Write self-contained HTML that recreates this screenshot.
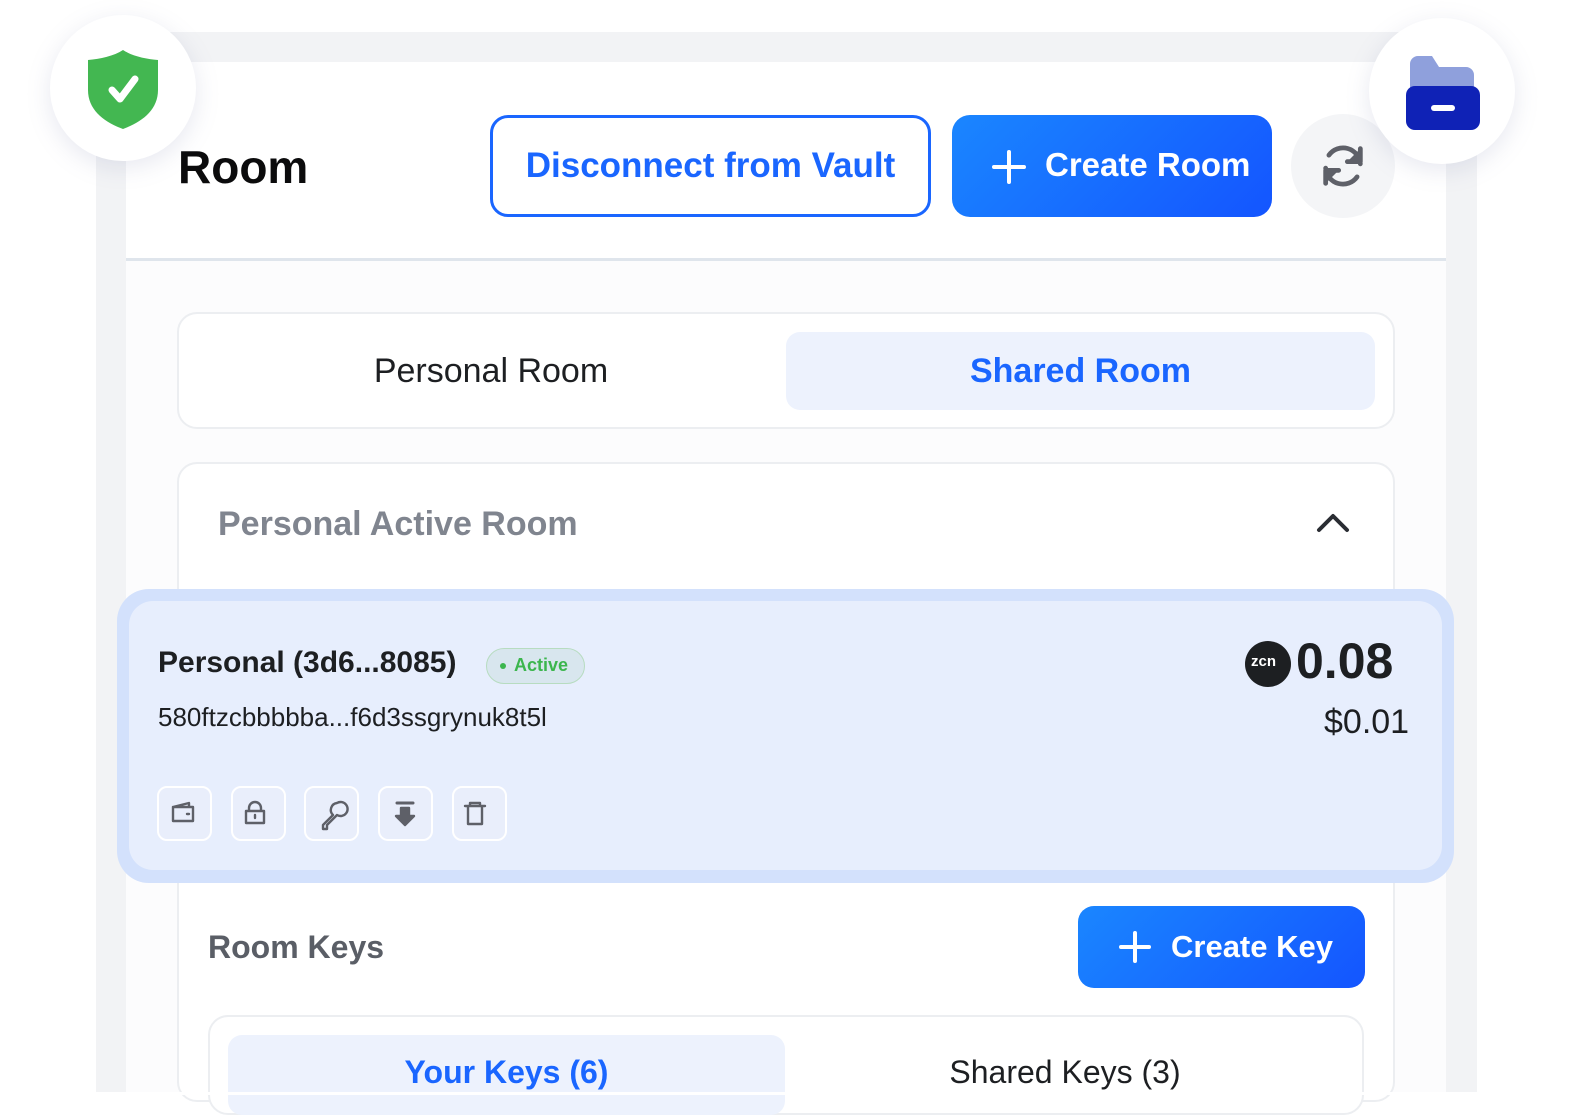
<!DOCTYPE html>
<html><head><style>
*{box-sizing:border-box;margin:0;padding:0}
body{width:1591px;height:1095px;background:#fff;position:relative;overflow:hidden;font-family:"Liberation Sans",sans-serif}
.a{position:absolute}
.t{position:absolute;white-space:nowrap;line-height:1}
</style></head><body>
<div class="a" style="left:96px;top:32px;width:1381px;height:1063px;background:#f2f3f5"></div>
<div class="a" style="left:126px;top:62px;width:1320px;height:1033px;background:#fff"></div>
<div class="a" style="left:126px;top:258px;width:1320px;height:3px;background:#dfe5ec"></div>
<div class="a" style="left:126px;top:261px;width:1320px;height:834px;background:#fcfcfd"></div>

<div class="t" style="left:178px;top:144px;font-size:46px;font-weight:bold;color:#0b0b0c">Room</div>
<div class="a" style="left:490px;top:115px;width:441px;height:102px;border:3px solid #1a66ff;border-radius:18px;background:#fff"></div>
<div class="t" style="left:490px;top:148px;width:441px;text-align:center;font-size:35px;font-weight:bold;color:#1a66ff">Disconnect from Vault</div>
<div class="a" style="left:952px;top:115px;width:320px;height:102px;border-radius:18px;background:linear-gradient(135deg,#1a86ff,#1455ff)"></div>
<svg class="a" style="left:990px;top:148px" width="38" height="38"><path d="M19 4v30M4 19h30" stroke="#fff" stroke-width="4" stroke-linecap="round"/></svg>
<div class="t" style="left:1045px;top:148px;font-size:33px;font-weight:bold;color:#fff">Create Room</div>
<div class="a" style="left:1291px;top:114px;width:104px;height:104px;border-radius:50%;background:#f4f5f7"></div>
<svg class="a" style="left:1317px;top:140px" width="52" height="52" viewBox="0 0 24 24" fill="none" stroke="#5e6068" stroke-width="2.2" stroke-linecap="round" stroke-linejoin="round"><path d="M20 11A8 8 0 0 0 5.5 7M4 13a8 8 0 0 0 14.5 4"/><path d="M20 4v6h-6" fill="#5e6068"/><path d="M4 20v-6h6" fill="#5e6068"/></svg>

<div class="a" style="left:50px;top:15px;width:146px;height:146px;border-radius:50%;background:#fff;box-shadow:0 6px 24px rgba(120,130,170,.18)"></div>
<svg class="a" style="left:84px;top:48px" width="78" height="82" viewBox="0 0 78 82"><path d="M39 2C30 8 16 11 4 12v30c0 20 16 32 35 39 19-7 35-19 35-39V12C62 11 48 8 39 2z" fill="#43b751"/><path d="M28 42l8 9 15-20" stroke="#fff" stroke-width="7" fill="none" stroke-linecap="round" stroke-linejoin="round"/></svg>
<div class="a" style="left:1369px;top:18px;width:146px;height:146px;border-radius:50%;background:#fff;box-shadow:0 6px 24px rgba(120,130,170,.18)"></div>
<svg class="a" style="left:1404px;top:52px" width="78" height="80" viewBox="0 0 78 80"><path d="M6 12a8 8 0 0 1 8-8h14l7 11h27a8 8 0 0 1 8 8v20H6z" fill="#8fa0dc"/><rect x="2" y="34" width="74" height="44" rx="9" fill="#0f22b6"/><rect x="27" y="53" width="24" height="6" rx="3" fill="#fff"/></svg>

<div class="a" style="left:177px;top:312px;width:1218px;height:117px;border:2px solid #eceef1;border-radius:20px;background:#fff"></div>
<div class="a" style="left:786px;top:332px;width:589px;height:78px;border-radius:14px;background:#edf2fd"></div>
<div class="t" style="left:177px;top:354px;width:628px;text-align:center;font-size:34px;color:#1d1f22">Personal Room</div>
<div class="t" style="left:786px;top:354px;width:589px;text-align:center;font-size:34px;font-weight:bold;color:#1a66ff">Shared Room</div>

<div class="a" style="left:177px;top:462px;width:1218px;height:640px;border:2px solid #eceef1;border-radius:20px;background:#fff"></div>
<div class="t" style="left:218px;top:507px;font-size:34px;font-weight:bold;color:#80858f">Personal Active Room</div>
<svg class="a" style="left:1316px;top:512px" width="34" height="22"><path d="M3 18L17 4l14 14" stroke="#2a2d33" stroke-width="4" fill="none" stroke-linecap="round" stroke-linejoin="round"/></svg>

<div class="a" style="left:117px;top:589px;width:1337px;height:294px;border-radius:32px;background:#d3e1fc"></div>
<div class="a" style="left:129px;top:601px;width:1313px;height:269px;border-radius:24px;background:#e7eefd"></div>
<div class="t" style="left:158px;top:648px;font-size:30px;font-weight:bold;color:#1d1f22">Personal (3d6...8085)</div>
<div class="a" style="left:486px;top:648px;width:99px;height:36px;border-radius:18px;background:#d8e6ee;border:1px solid #b7dcc0"></div>
<div class="a" style="left:500px;top:663px;width:6px;height:6px;border-radius:50%;background:#3cb64e"></div>
<div class="t" style="left:514px;top:656px;font-size:18px;font-weight:bold;color:#3cb64e">Active</div>
<div class="t" style="left:158px;top:704px;font-size:26px;color:#1d1f22">580ftzcbbbbba...f6d3ssgrynuk8t5l</div>
<div class="t" style="left:1296px;top:636px;font-size:50px;font-weight:bold;color:#1d1f22">0.08</div>
<div class="a" style="left:1245px;top:641px;width:46px;height:46px;border-radius:50%;background:#1d1f22"></div>
<div class="t" style="left:1251px;top:654px;font-size:15px;font-weight:bold;color:#fff">zcn</div>
<div class="t" style="left:1324px;top:705px;font-size:34px;color:#1d1f22">$0.01</div>

<div class="a" style="left:157px;top:786px;width:55px;height:55px;border-radius:10px;border:2px solid #fff;background:#e9eefb"></div>
<div class="a" style="left:231px;top:786px;width:55px;height:55px;border-radius:10px;border:2px solid #fff;background:#e9eefb"></div>
<div class="a" style="left:304px;top:786px;width:55px;height:55px;border-radius:10px;border:2px solid #fff;background:#e9eefb"></div>
<div class="a" style="left:378px;top:786px;width:55px;height:55px;border-radius:10px;border:2px solid #fff;background:#e9eefb"></div>
<div class="a" style="left:452px;top:786px;width:55px;height:55px;border-radius:10px;border:2px solid #fff;background:#e9eefb"></div>
<svg class="a" style="left:157px;top:786px" width="360" height="55" fill="none" stroke="#5e6068" stroke-width="2.4" stroke-linejoin="round" stroke-linecap="round">
<path d="M16 21l16-4v4M16 21h20v14H16z"/><path d="M30 28h2"/>
<path d="M92 25v-3a6 6 0 0 1 12 0v3M89 25h18v12H89z"/><path d="M98 29v3"/>
<path d="M180 17a7 7 0 1 1 0 12l-10 10v4h-4v-4l10-10a7 7 0 0 1 4-12z"/>
<path d="M240 17h16" stroke-width="3"/><path d="M244 22h8v8h5l-9 9-9-9h5z" fill="#5e6068"/>
<path d="M308 20h20M313 20v-3h10v3M311 20v18h14V20"/>
</svg>

<div class="t" style="left:208px;top:931px;font-size:32px;font-weight:bold;color:#5a5e66">Room Keys</div>
<div class="a" style="left:1078px;top:906px;width:287px;height:82px;border-radius:16px;background:linear-gradient(135deg,#1a86ff,#1455ff)"></div>
<svg class="a" style="left:1118px;top:930px" width="34" height="34"><path d="M17 3v28M3 17h28" stroke="#fff" stroke-width="4" stroke-linecap="round"/></svg>
<div class="t" style="left:1171px;top:931px;font-size:31px;font-weight:bold;color:#fff">Create Key</div>

<div class="a" style="left:208px;top:1015px;width:1156px;height:100px;border:2px solid #eceef1;border-radius:20px;background:#fff"></div>
<div class="a" style="left:228px;top:1035px;width:557px;height:80px;border-radius:14px;background:#edf2fd"></div>
<div class="t" style="left:228px;top:1056px;width:557px;text-align:center;font-size:32px;font-weight:bold;color:#1a66ff">Your Keys (6)</div>
<div class="t" style="left:785px;top:1056px;width:560px;text-align:center;font-size:32px;color:#1d1f22">Shared Keys (3)</div>
<div class="a" style="left:0;top:1092px;width:1591px;height:3px;background:#fff"></div>
</body></html>
